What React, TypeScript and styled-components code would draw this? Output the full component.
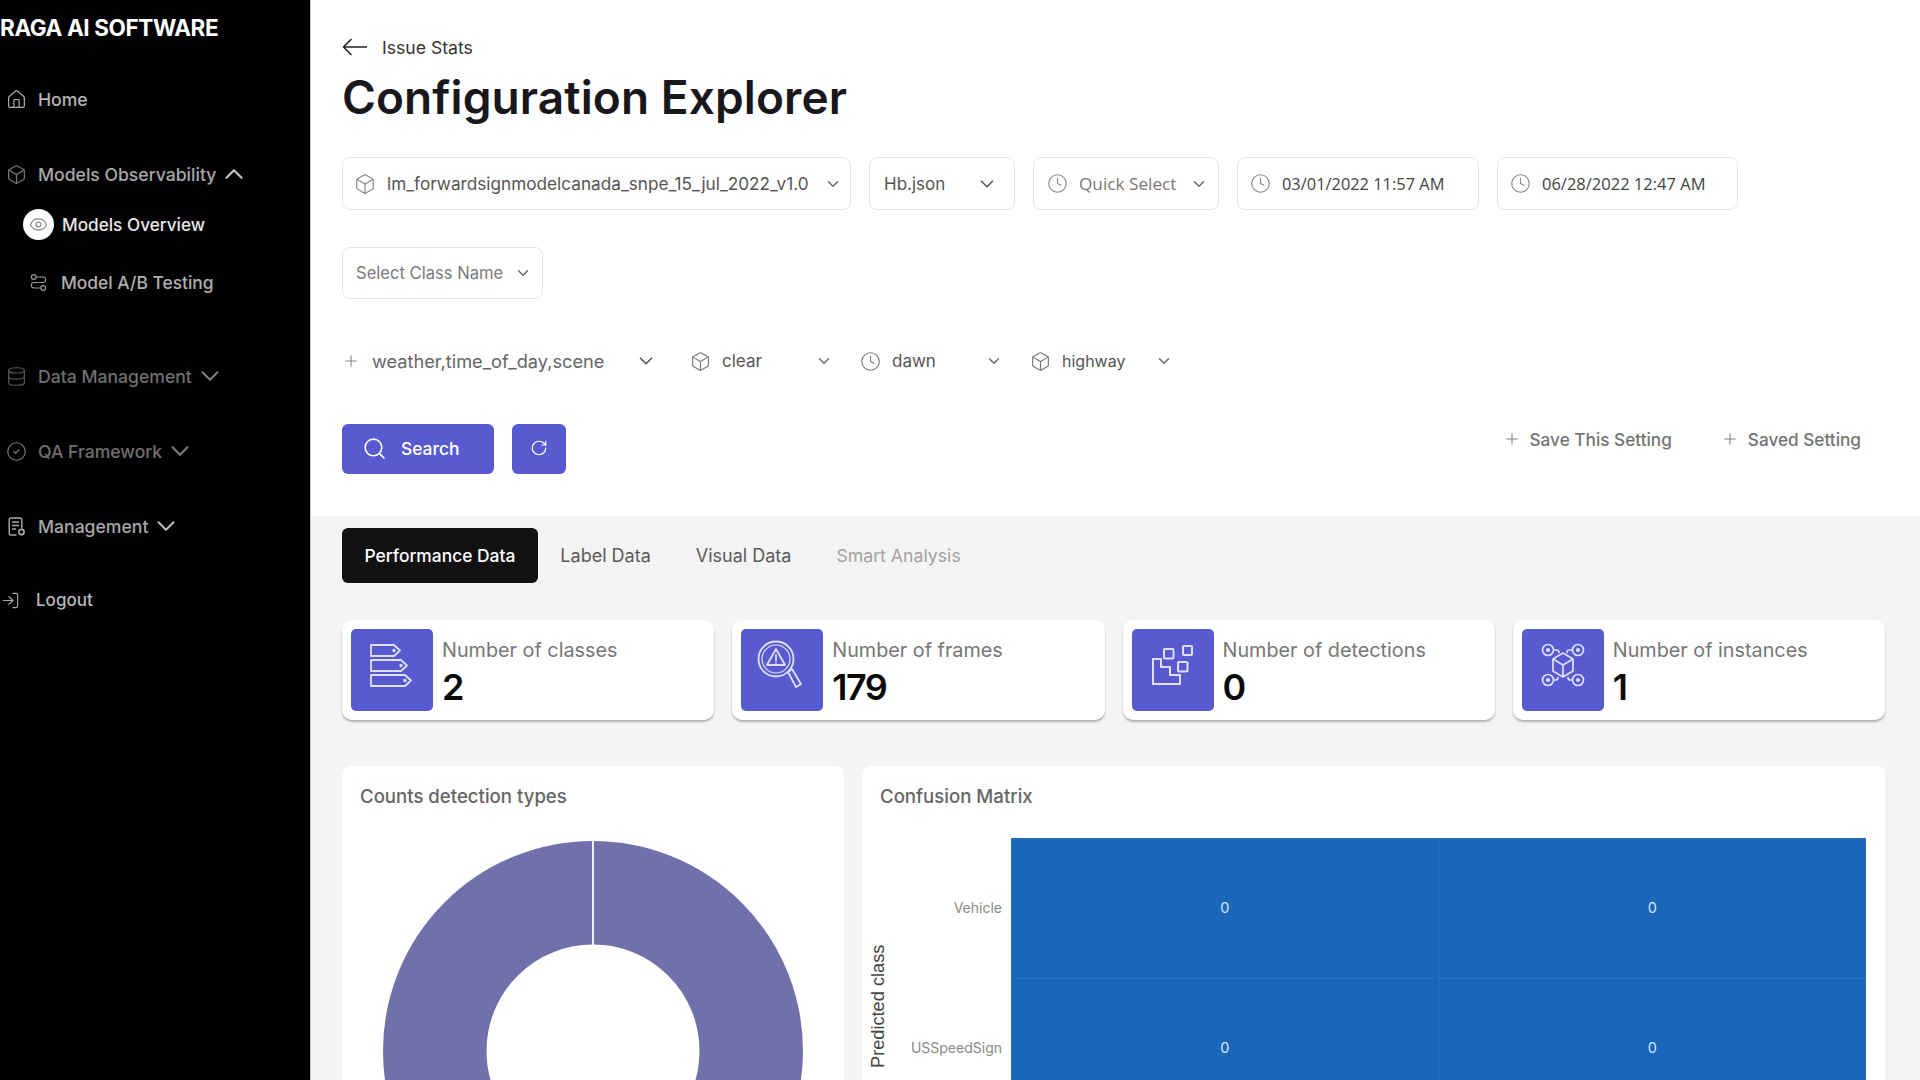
import React from "react";
import styled, { createGlobalStyle } from "styled-components";
import {
  Box, ChevronDown, ChevronUp, Clock, Database, CircleCheck, Eye, House, LogIn, Plus, RotateCw, Route, Search,
} from "lucide-react";

const Global = createGlobalStyle`
  html, body { margin: 0; padding: 0; background: #fff; height: 100%; overflow: hidden; }
  body { font-family: "Inter", "Liberation Sans", sans-serif; }
  * { box-sizing: border-box; }
`;

const Page = styled.div`
  display: flex;
  width: 1920px;
  height: 1080px;
  overflow: hidden;
`;

const Sidebar = styled.aside`
  flex: 0 0 311px;
  background: #000;
  border-right: 1px solid #c8c8c8;
  display: flex;
  flex-direction: column;
`;

const Brand = styled.div`
  height: 56px;
  line-height: 56px;
  color: #fff;
  font-size: 22.5px;
  font-weight: 700;
  letter-spacing: -0.4px;
  white-space: nowrap;
`;

const NavRow = styled.div<{ $top: number; $left?: number; $color: string; $gap?: number; $size?: number }>`
  display: flex;
  align-items: center;
  height: 40px;
  margin-top: ${(p) => p.$top}px;
  padding-left: ${(p) => p.$left ?? 6}px;
  gap: ${(p) => p.$gap ?? 11}px;
  color: ${(p) => p.$color};
  font-size: ${(p) => p.$size ?? 17.6}px;
  font-weight: 500;
  white-space: nowrap;
`;

const EyeBadge = styled.span`
  width: 31px;
  height: 31px;
  border-radius: 50%;
  background: #fff;
  color: #8b8b8b;
  display: flex;
  align-items: center;
  justify-content: center;
  margin-right: -2px;
`;

const Caret = styled.span`
  display: flex;
  margin-left: -8px;
`;

const FlippedRoute = styled(Route)`
  transform: scaleX(-1);
`;

const Main = styled.main`
  flex: 1;
  min-width: 0;
  display: flex;
  flex-direction: column;
  background: #f4f4f4;
`;

const TopSection = styled.section`
  height: 516px;
  flex: 0 0 516px;
  background: #fff;
  padding: 35px 59px 0 31px;
  display: flex;
  flex-direction: column;
`;

const BackRow = styled.div`
  display: flex;
  align-items: center;
  height: 24px;
  gap: 15px;
  font-size: 17.6px;
  color: #333;
  font-weight: 400;
`;

const Title = styled.h1`
  margin: 10px 0 0;
  height: 56px;
  line-height: 56px;
  font-size: 46px;
  font-weight: 600;
  color: #17171c;
  letter-spacing: 0.1px;
`;

const SelectRow = styled.div`
  display: flex;
  margin-top: 32px;
  gap: 18px;
`;

const SelectBox = styled.div<{ $w: number; $h?: number; $pl: number; $pr: number }>`
  width: ${(p) => p.$w}px;
  height: ${(p) => p.$h ?? 53}px;
  padding: 0 ${(p) => p.$pr}px 0 ${(p) => p.$pl}px;
  border: 1.5px solid #e3e5e8;
  border-radius: 8px;
  display: flex;
  align-items: center;
  background: #fff;
  white-space: nowrap;
`;

const BoxText = styled.span<{ $color?: string; $font?: string; $size?: number; $left?: number }>`
  flex: 1;
  margin-left: ${(p) => p.$left ?? 0}px;
  color: ${(p) => p.$color ?? "#555"};
  font-family: ${(p) => p.$font ?? '"Inter"'}, "Liberation Sans", sans-serif;
  font-size: ${(p) => p.$size ?? 17}px;
`;

const ClassRow = styled.div`
  margin-top: 37px;
  display: flex;
`;

const FilterRow = styled.div`
  margin-top: 47px;
  height: 30px;
  display: flex;
  align-items: center;
  gap: 27px;
`;

const FilterItem = styled.div<{ $w: number; $pr?: number }>`
  width: ${(p) => p.$w}px;
  padding-right: ${(p) => p.$pr ?? 0}px;
  display: flex;
  align-items: center;
  color: #555;
  font-size: 17px;
  white-space: nowrap;
`;

const ActionRow = styled.div`
  margin-top: 48px;
  display: flex;
  align-items: flex-start;
`;

const PrimaryButton = styled.button<{ $w: number; $ml?: number; $pl?: number }>`
  width: ${(p) => p.$w}px;
  height: 50px;
  margin-left: ${(p) => p.$ml ?? 0}px;
  border: none;
  border-radius: 6px;
  background: #575bcf;
  color: #fff;
  font-family: "Inter", sans-serif;
  font-size: 17.4px;
  font-weight: 500;
  display: flex;
  align-items: center;
  justify-content: ${(p) => (p.$pl ? "flex-start" : "center")};
  gap: 14px;
  padding: 0 0 2px ${(p) => p.$pl ?? 0}px;
`;

const SaveLinks = styled.div`
  margin-left: auto;
  display: flex;
  gap: 49px;
  height: 30px;
  align-items: center;
`;

const SaveLink = styled.span`
  display: flex;
  align-items: center;
  gap: 9px;
  color: #757575;
  font-size: 17.2px;
  font-weight: 500;
`;

const LowerSection = styled.section`
  padding: 12px 35px 0 31px;
`;

const Tabs = styled.div`
  display: flex;
  align-items: center;
  height: 55px;
`;

const Tab = styled.div<{ $active?: boolean; $muted?: boolean }>`
  height: 55px;
  line-height: 55px;
  padding: 0 22.5px;
  border-radius: 6px;
  background: ${(p) => (p.$active ? "#111" : "transparent")};
  color: ${(p) => (p.$active ? "#fff" : p.$muted ? "#a2a2a2" : "#5a5a5a")};
  font-size: ${(p) => (p.$active ? 17.4 : p.$muted ? 17.7 : 18)}px;
  font-weight: ${(p) => (p.$active ? 500 : 400)};
  font-family: "Inter", sans-serif;
  white-space: nowrap;
`;

const Cards = styled.div`
  margin-top: 37px;
  display: grid;
  grid-template-columns: repeat(4, 1fr);
  gap: 18px;
`;

const Card = styled.div`
  height: 100px;
  background: #fff;
  border-radius: 10px;
  box-shadow: 0 2px 2px rgba(0, 0, 0, 0.28);
  padding: 9px;
  display: flex;
  gap: 9px;
`;

const CardIcon = styled.div`
  width: 82px;
  height: 82px;
  background: #575bcf;
  border-radius: 5px;
  flex: none;
`;

const CardBody = styled.div`
  display: flex;
  flex-direction: column;
`;

const CardLabel = styled.div`
  margin-top: 8px;
  height: 26px;
  line-height: 26px;
  color: #777;
  font-size: 19.8px;
`;

const CardValue = styled.div`
  margin-top: 2px;
  height: 44px;
  line-height: 44px;
  color: #0a0a0a;
  font-size: 36px;
  font-weight: 600;
  letter-spacing: -1.5px;
`;

const Panels = styled.div`
  margin-top: 46px;
  display: grid;
  grid-template-columns: 502px 1fr;
  gap: 18px;
`;

const Panel = styled.div`
  height: 420px;
  background: #fff;
  border-radius: 8px;
  padding: 18px 19px 0 18px;
`;

const PanelTitle = styled.div`
  height: 24px;
  line-height: 24px;
  color: #666;
  font-size: 18.6px;
  font-weight: 500;
`;

const Donut = styled.svg`
  display: block;
  margin: 33px auto 0;
`;

const Matrix = styled.div`
  margin: 30px 0 0 -12px;
  display: grid;
  grid-template-columns: 20px 114px 1fr;
`;

const AxisLabel = styled.div`
  writing-mode: vertical-rl;
  transform: rotate(180deg);
  height: 280px;
  padding-top: 50px;
  color: #444;
  font-family: "Liberation Sans", sans-serif;
  font-size: 18.2px;
  display: flex;
  align-items: center;
  justify-content: flex-start;
  white-space: nowrap;
`;

const Ticks = styled.div`
  display: grid;
  grid-template-rows: 140px 140px;
`;

const Tick = styled.div`
  display: flex;
  align-items: center;
  justify-content: flex-end;
  padding-bottom: 2px;
  color: #8a8a8a;
  font-size: 14px;
`;

const Heatmap = styled.div`
  margin-left: 9px;
  display: grid;
  grid-template-columns: 1fr 1fr;
  grid-template-rows: 140px 140px;
`;

const HeatCell = styled.div`
  background: #1a66bb;
  color: #d8e6f6;
  font-size: 14.5px;
  padding-bottom: 2px;
  display: flex;
  align-items: center;
  justify-content: center;
  box-shadow: inset 0 0 0 0.5px #2a70c0;
`;

const iconStroke = "#dfe0f6";

const BackArrow = () => (
  <svg width="25" height="18" viewBox="0 0 25 18" fill="none" stroke="#222" strokeWidth="1.6" strokeLinecap="round" strokeLinejoin="round">
    <path d="M1.5 9H24.5M9 1.5 1.5 9 9 16.5" />
  </svg>
);

const ManagementIcon = () => (
  <svg width="21" height="21" viewBox="0 0 21 21" fill="none" stroke="#aaa" strokeWidth="1.4" strokeLinecap="round" strokeLinejoin="round">
    <path d="M10 19H5a1.8 1.8 0 0 1-1.8-1.8V3.8A1.8 1.8 0 0 1 5 2h9a1.8 1.8 0 0 1 1.8 1.8V12" />
    <path d="M6.5 6h6M6.5 9.5h6M6.5 13h3" />
    <circle cx="15.5" cy="16" r="2.6" strokeWidth="1.6" />
  </svg>
);

const ClassesIcon = () => (
  <svg width="82" height="82" viewBox="0 0 82 82" fill="none" stroke={iconStroke} strokeWidth="1.8" strokeLinejoin="round">
    <path d="M20 16h23l6 5.5-6 5.5H20z" />
    <path d="M20 31h30l6 5.5-6 5.5H20z" />
    <path d="M20 46h34l6 5.5-6 5.5H20z" />
    <circle cx="43" cy="21.5" r="0.8" />
    <circle cx="50" cy="36.5" r="0.8" />
    <circle cx="54" cy="51.5" r="0.8" />
  </svg>
);

const FramesIcon = () => (
  <svg width="82" height="82" viewBox="0 0 82 82" fill="none" stroke={iconStroke} strokeWidth="1.8" strokeLinejoin="round" strokeLinecap="round">
    <circle cx="35" cy="30" r="17.5" />
    <circle cx="35" cy="30" r="14" strokeWidth="1.2" />
    <path d="M35 20l9 16H26z" />
    <path d="M35 26v5M35 33.5v.3" />
    <path d="M47 43l4-3 9 15-5 3z" />
  </svg>
);

const DetectionsIcon = () => (
  <svg width="82" height="82" viewBox="0 0 82 82" fill="none" stroke={iconStroke} strokeWidth="2">
    <rect x="32" y="20" width="9.5" height="9.5" rx="1" />
    <rect x="51" y="17" width="9" height="9" rx="1" />
    <rect x="46" y="33" width="9.5" height="9.5" rx="1" />
    <path d="M21 30h8v8h9v8h10v9H21z" />
  </svg>
);

const InstancesIcon = () => (
  <svg width="82" height="82" viewBox="0 0 82 82" fill="none" stroke={iconStroke} strokeWidth="1.7" strokeLinejoin="round">
    <circle cx="26" cy="21" r="5.5" /><circle cx="26" cy="21" r="1.2" />
    <circle cx="56" cy="21" r="5.5" /><circle cx="56" cy="21" r="1.2" />
    <circle cx="26" cy="51" r="5.5" /><circle cx="26" cy="51" r="1.2" />
    <circle cx="56" cy="51" r="5.5" /><circle cx="56" cy="51" r="1.2" />
    <path d="M41 24l10 6v12l-10 6-10-6V30z" />
    <path d="M31 30l10 6 10-6M41 36v12" />
    <path d="M31.5 21H35q2 0 2 3M50.5 21H47q-2 0-2 3M31.5 51H34q2 0 2-3M50.5 51H48q-2 0-2-3" />
  </svg>
);

const DonutChart = () => (
  <Donut width="420" height="420" viewBox="0 0 420 420">
    <circle cx="210" cy="210" r="158.25" fill="none" stroke="#7270ab" strokeWidth="103.5" />
    <rect x="209" y="0" width="2" height="104" fill="#f0f0f5" />
  </Donut>
);

const chevron = (size: number, color: string) => <ChevronDown size={size} color={color} strokeWidth={1.8} />;

export default function App() {
  return (
    <Page>
      <Global />
      <Sidebar>
        <Brand>RAGA AI SOFTWARE</Brand>
        <NavRow $top={23} $color="#b4b4b4">
          <House size={21} strokeWidth={1.4} color="#aaa" />
          <span>Home</span>
        </NavRow>
        <NavRow $top={35} $color="#a8a8a8">
          <Box size={21} strokeWidth={1.4} color="#777" />
          <span>Models Observability</span>
          <Caret><ChevronUp size={30} strokeWidth={1.7} color="#c4c4c4" /></Caret>
        </NavRow>
        <NavRow $top={10} $left={23} $color="#e8e8e8" $gap={10} $size={17.2}>
          <EyeBadge><Eye size={19} strokeWidth={1.5} /></EyeBadge>
          <span>Models Overview</span>
        </NavRow>
        <NavRow $top={18} $left={29} $color="#b0b0b0" $gap={13} $size={17.4}>
          <FlippedRoute size={19} strokeWidth={1.4} color="#999" />
          <span>Model A/B Testing</span>
        </NavRow>
        <NavRow $top={54} $color="#6f6f6f">
          <Database size={21} strokeWidth={1.4} color="#555" />
          <span>Data Management</span>
          <Caret><ChevronDown size={30} strokeWidth={1.6} color="#808080" /></Caret>
        </NavRow>
        <NavRow $top={35} $color="#6f6f6f">
          <CircleCheck size={21} strokeWidth={1.4} color="#777" />
          <span>QA Framework</span>
          <Caret><ChevronDown size={30} strokeWidth={1.6} color="#808080" /></Caret>
        </NavRow>
        <NavRow $top={35} $color="#a8a8a8">
          <ManagementIcon />
          <span>Management</span>
          <Caret><ChevronDown size={30} strokeWidth={1.6} color="#bdbdbd" /></Caret>
        </NavRow>
        <NavRow $top={34} $left={1} $color="#b8b8b8" $gap={16} $size={17}>
          <LogIn size={19} strokeWidth={1.4} color="#aaa" />
          <span>Logout</span>
        </NavRow>
      </Sidebar>
      <Main>
        <TopSection>
          <BackRow>
            <BackArrow />
            <span>Issue Stats</span>
          </BackRow>
          <Title>Configuration Explorer</Title>
          <SelectRow>
            <SelectBox $w={509} $pl={11} $pr={8}>
              <Box size={22} strokeWidth={1.3} color="#888" />
              <BoxText $left={11} $size={17.2}>lm_forwardsignmodelcanada_snpe_15_jul_2022_v1.0</BoxText>
              {chevron(18, "#666")}
            </SelectBox>
            <SelectBox $w={146} $pl={14} $pr={16}>
              <BoxText>Hb.json</BoxText>
              {chevron(22, "#555")}
            </SelectBox>
            <SelectBox $w={186} $pl={13} $pr={10}>
              <Clock size={21} strokeWidth={1.3} color="#888" />
              <BoxText $left={11} $color="#777" $font='"Open Sans"' $size={17.2}>Quick Select</BoxText>
              {chevron(18, "#666")}
            </SelectBox>
            <SelectBox $w={242} $pl={12} $pr={8}>
              <Clock size={21} strokeWidth={1.3} color="#888" />
              <BoxText $left={11} $color="#444" $font='"Open Sans"' $size={16.4}>03/01/2022 11:57 AM</BoxText>
            </SelectBox>
            <SelectBox $w={241} $pl={12} $pr={8}>
              <Clock size={21} strokeWidth={1.3} color="#888" />
              <BoxText $left={11} $color="#444" $font='"Open Sans"' $size={16.5}>06/28/2022 12:47 AM</BoxText>
            </SelectBox>
          </SelectRow>
          <ClassRow>
            <SelectBox $w={201} $h={52} $pl={13} $pr={10}>
              <BoxText $color="#7a7a7a" $size={16.6}>Select Class Name</BoxText>
              {chevron(18, "#666")}
            </SelectBox>
          </ClassRow>
          <FilterRow>
            <FilterItem $w={321} $pr={6}>
              <Plus size={18} strokeWidth={1.4} color="#888" />
              <BoxText $left={12} $color="#666" $size={18.2}>weather,time_of_day,scene</BoxText>
              {chevron(22, "#555")}
            </FilterItem>
            <FilterItem $w={143}>
              <Box size={21} strokeWidth={1.3} color="#777" />
              <BoxText $left={11}>clear</BoxText>
              {chevron(18, "#666")}
            </FilterItem>
            <FilterItem $w={143}>
              <Clock size={21} strokeWidth={1.3} color="#777" />
              <BoxText $left={11}>dawn</BoxText>
              {chevron(18, "#666")}
            </FilterItem>
            <FilterItem $w={143}>
              <Box size={21} strokeWidth={1.3} color="#777" />
              <BoxText $left={11} $size={16}>highway</BoxText>
              {chevron(18, "#666")}
            </FilterItem>
          </FilterRow>
          <ActionRow>
            <PrimaryButton $w={152} $pl={20}>
              <Search size={25} strokeWidth={1.5} />
              <span>Search</span>
            </PrimaryButton>
            <PrimaryButton $w={54} $ml={18}>
              <RotateCw size={18} strokeWidth={1.6} />
            </PrimaryButton>
            <SaveLinks>
              <SaveLink><Plus size={18} strokeWidth={1.3} color="#777" />Save This Setting</SaveLink>
              <SaveLink><Plus size={18} strokeWidth={1.3} color="#777" />Saved Setting</SaveLink>
            </SaveLinks>
          </ActionRow>
        </TopSection>
        <LowerSection>
          <Tabs>
            <Tab $active>Performance Data</Tab>
            <Tab>Label Data</Tab>
            <Tab>Visual Data</Tab>
            <Tab $muted>Smart Analysis</Tab>
          </Tabs>
          <Cards>
            <Card>
              <CardIcon><ClassesIcon /></CardIcon>
              <CardBody><CardLabel>Number of classes</CardLabel><CardValue>2</CardValue></CardBody>
            </Card>
            <Card>
              <CardIcon><FramesIcon /></CardIcon>
              <CardBody><CardLabel>Number of frames</CardLabel><CardValue>179</CardValue></CardBody>
            </Card>
            <Card>
              <CardIcon><DetectionsIcon /></CardIcon>
              <CardBody><CardLabel>Number of detections</CardLabel><CardValue>0</CardValue></CardBody>
            </Card>
            <Card>
              <CardIcon><InstancesIcon /></CardIcon>
              <CardBody><CardLabel>Number of instances</CardLabel><CardValue>1</CardValue></CardBody>
            </Card>
          </Cards>
          <Panels>
            <Panel>
              <PanelTitle>Counts detection types</PanelTitle>
              <DonutChart />
            </Panel>
            <Panel>
              <PanelTitle>Confusion Matrix</PanelTitle>
              <Matrix>
                <AxisLabel>Predicted class</AxisLabel>
                <Ticks>
                  <Tick>Vehicle</Tick>
                  <Tick>USSpeedSign</Tick>
                </Ticks>
                <Heatmap>
                  <HeatCell>0</HeatCell>
                  <HeatCell>0</HeatCell>
                  <HeatCell>0</HeatCell>
                  <HeatCell>0</HeatCell>
                </Heatmap>
              </Matrix>
            </Panel>
          </Panels>
        </LowerSection>
      </Main>
    </Page>
  );
}
